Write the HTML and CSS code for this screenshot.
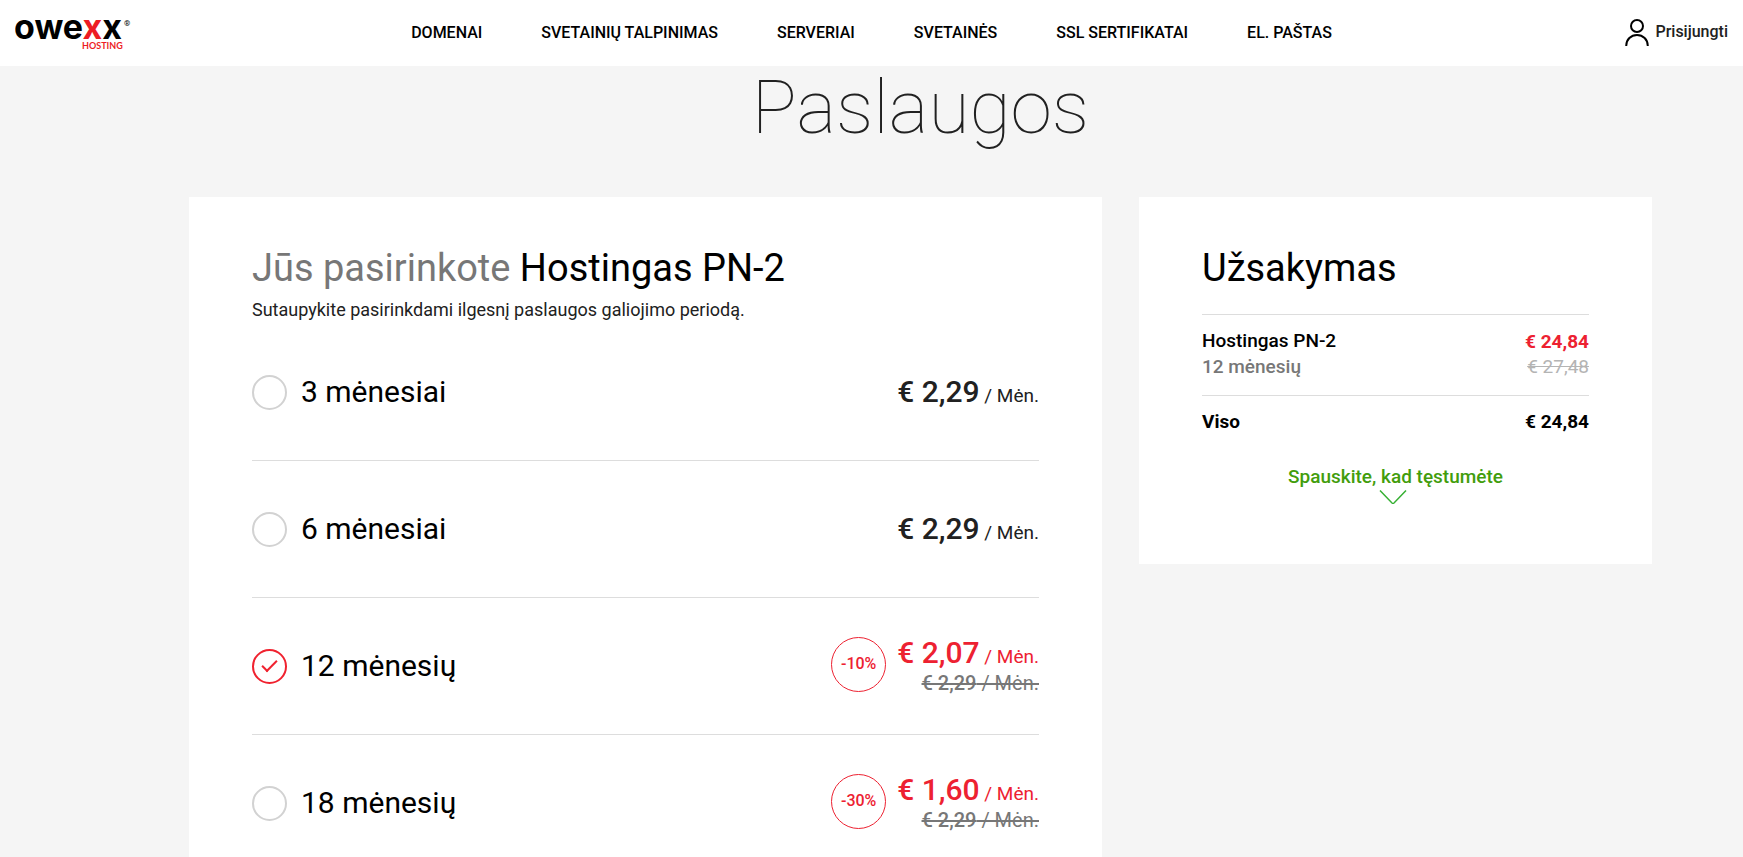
FILE: index.html
```html
<!DOCTYPE html>
<html lang="lt">
<head>
  <meta charset="UTF-8">
  <meta name="viewport" content="width=device-width, initial-scale=1">
  <title>Paslaugos</title>
  <link rel="stylesheet" href="styles.css">
</head>
<body>
  <header class="header">
    <a class="logo" href="#">
      <svg width="120" height="56" viewBox="0 0 120 56">
        <text class="logo-name" x="-1" y="34">owe<tspan class="logo-red">x</tspan>x</text>
        <text class="logo-sub" x="67" y="44">HOSTING</text>
        <text class="logo-mark" x="109" y="21">®</text>
      </svg>
    </a>
    <nav class="nav">
      <a href="#">DOMENAI</a>
      <a href="#">SVETAINIŲ TALPINIMAS</a>
      <a href="#">SERVERIAI</a>
      <a href="#">SVETAINĖS</a>
      <a href="#">SSL SERTIFIKATAI</a>
      <a href="#">EL. PAŠTAS</a>
    </nav>
    <a class="login" href="#">
      <svg width="24" height="29" viewBox="0 0 24 29" fill="none" stroke="#000" stroke-width="2">
        <circle cx="12" cy="7" r="6"/>
        <path d="M1.2 27C1.2 20.500 6 16 12 16s10.800 4.500 10.800 11"/>
      </svg>
      <span>Prisijungti</span>
    </a>
  </header>

  <main class="page">
    <h1>Paslaugos</h1>
    <div class="columns">
      <form class="card">
        <h2><span class="muted">Jūs pasirinkote</span> Hostingas PN-2</h2>
        <p class="subtitle">Sutaupykite pasirinkdami ilgesnį paslaugos galiojimo periodą.</p>

        <div class="period">
          <input type="radio" name="period" id="period3">
          <label for="period3">3 mėnesiai</label>
          <div class="prices">
            <div class="price"><b>€ 2,29</b><small> / Mėn.</small></div>
          </div>
        </div>
        <div class="period">
          <input type="radio" name="period" id="period6">
          <label for="period6">6 mėnesiai</label>
          <div class="prices">
            <div class="price"><b>€ 2,29</b><small> / Mėn.</small></div>
          </div>
        </div>
        <div class="period">
          <input type="radio" name="period" id="period12" checked>
          <label for="period12">12 mėnesių</label>
          <span class="discount">-10%</span>
          <div class="prices">
            <div class="price sale"><b>€ 2,07</b><small> / Mėn.</small></div>
            <del class="old-price"><b>€ 2,29</b> / Mėn.</del>
          </div>
        </div>
        <div class="period">
          <input type="radio" name="period" id="period18">
          <label for="period18">18 mėnesių</label>
          <span class="discount">-30%</span>
          <div class="prices">
            <div class="price sale"><b>€ 1,60</b><small> / Mėn.</small></div>
            <del class="old-price"><b>€ 2,29</b> / Mėn.</del>
          </div>
        </div>
      </form>

      <aside class="card summary">
        <h2>Užsakymas</h2>
        <div class="line">
          <div>
            <div>Hostingas PN-2</div>
            <div class="muted">12 mėnesių</div>
          </div>
          <div class="amounts">
            <div class="amount sale">€ 24,84</div>
            <del class="old-amount">€ 27,48</del>
          </div>
        </div>
        <div class="line total">
          <div>Viso</div>
          <div class="amount">€ 24,84</div>
        </div>
        <button class="continue" type="button">
          Spauskite, kad tęstumėte
          <svg width="34" height="14" viewBox="0 0 34 14" fill="none" stroke="#37b034" stroke-width="1.5">
            <path d="M1 0.500L13 13q1 0.800 2 0L27 0.500"/>
          </svg>
        </button>
      </aside>
    </div>
  </main>
</body>
</html>
```
FILE: styles.css
```css
body {
  margin: 0;
  background-color: #f5f5f5;
  color: #212121;
  font-family: Roboto, "Liberation Sans", sans-serif;
  font-size: 18px;
  line-height: 26px;
}
a {
  color: #000;
  text-decoration: none;
}
h1, h2, p {
  margin: 0;
}
b {
  font-weight: 500;
}

/* header */
.header {
  display: grid;
  grid-template-columns: 1fr auto 1fr;
  align-items: center;
  height: 66px;
  padding: 0 15px;
  background-color: #fff;
  font-size: 16px;
  font-weight: 500;
}
.logo svg {
  display: block;
}
.logo-name {
  font-family: Inter, sans-serif;
  font-size: 34px;
  font-weight: 700;
}
.logo-sub {
  font-family: Lato, sans-serif;
  font-size: 9px;
  font-weight: 700;
  fill: #ed1c24;
}
.logo-mark {
  font-size: 8px;
}
.logo-red {
  fill: #ed1c24;
}
.nav {
  display: flex;
  gap: 59px;
}
.login {
  display: flex;
  justify-content: flex-end;
  align-items: flex-start;
  gap: 6px;
  color: #212121;
}

/* content */
.page {
  padding: 0 91px 0 189px;
}
h1 {
  margin-bottom: 49px;
  font-size: 75px;
  font-weight: 100;
  line-height: 82px;
  text-align: center;
}
.columns {
  display: grid;
  grid-template-columns: 913fr 513fr;
  align-items: start;
  gap: 37px;
}
.card {
  padding: 49px 63px 60px;
  background-color: #fff;
}
h2 {
  color: #000;
  font-size: 38px;
  font-weight: 400;
  line-height: 44px;
}
.muted {
  color: #777;
}
.sale {
  color: #ed2131;
}
.subtitle {
  margin-top: 6px;
  line-height: 28px;
}

/* period list */
.period {
  display: flex;
  align-items: center;
  height: 136px;
  border-bottom: 1px solid #ddd;
}
.period:last-child {
  border-bottom: none;
}
.period input {
  appearance: none;
  display: grid;
  place-items: center;
  box-sizing: border-box;
  width: 35px;
  height: 35px;
  margin: 0;
  border: 2px solid #d2d2d2;
  border-radius: 50%;
}
.period input:checked {
  border-color: #f0222f;
}
.period input:checked::before {
  content: "";
  width: 13px;
  height: 6px;
  margin-bottom: 5px;
  border-left: 2px solid #f0222f;
  border-bottom: 2px solid #f0222f;
  transform: rotate(-45deg);
}
.period label {
  flex: 1;
  margin-left: 14px;
  color: #000;
  font-size: 30px;
  line-height: 36px;
}
.discount {
  box-sizing: border-box;
  width: 55px;
  height: 55px;
  margin: 0 11px 4px 0;
  border: 1px solid #ed2131;
  border-radius: 50%;
  color: #ed2131;
  font-size: 16px;
  font-weight: 500;
  line-height: 52px;
  text-align: center;
}
.prices {
  text-align: right;
}
.price {
  font-size: 30px;
  line-height: 34px;
}
.price small {
  font-size: 19px;
  line-height: 19px;
}
.old-price {
  display: block;
  color: #777;
  font-size: 20px;
}

/* order summary */
.summary {
  font-size: 19px;
}
.summary h2 {
  margin-bottom: 24px;
}
.line {
  display: flex;
  justify-content: space-between;
  align-items: center;
  padding: 13px 0 15px;
  border-top: 1px solid #ddd;
  color: #000;
  font-weight: 500;
}
.amounts {
  line-height: 25px;
  text-align: right;
}
.amount {
  font-weight: 700;
}
.old-amount {
  display: block;
  color: #b4b4b4;
  font-weight: 400;
}
.total {
  font-weight: 700;
}
.continue {
  display: flex;
  flex-direction: column;
  align-items: center;
  width: 100%;
  margin-top: 14px;
  padding: 0;
  border: none;
  background: none;
  color: #429d0c;
  font: inherit;
  font-weight: 500;
  cursor: pointer;
}
```
